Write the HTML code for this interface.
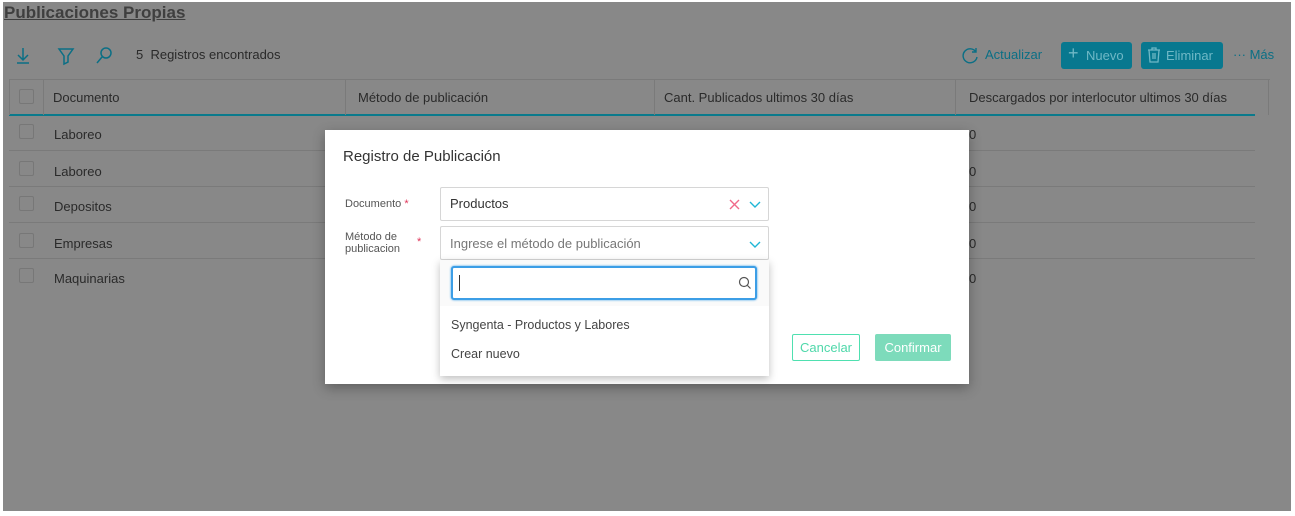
<!DOCTYPE html>
<html><head><meta charset="utf-8"><style>
*{box-sizing:border-box;margin:0;padding:0}
body{width:1295px;height:516px;background:#fff;position:relative;overflow:hidden;font-family:"Liberation Sans",sans-serif;color:#222}
.ov{position:absolute;left:3px;top:2px;width:1288px;height:509px;background:#888}
.a{position:absolute;white-space:nowrap}
.t{font-size:13px;color:#2a2a2a}
.hl{position:absolute;height:1px;background:#7a7a7a}
.cb{position:absolute;width:15px;height:15px;border:1px solid #777;border-radius:2px}
.btn{position:absolute;background:#08788f;color:#6fb8c6;border-radius:3px;font-size:13px;height:27px;line-height:27px;padding-left:25px}
.modal{position:absolute;left:325px;top:130px;width:644px;height:254px;background:#fff;box-shadow:0 4px 12px rgba(0,0,0,.3)}
.inp{position:absolute;border:1px solid #d6d6d6;border-radius:2px;background:#fff;font-size:13px}
</style></head><body>
<div class="ov"></div>
<div class="a" style="left:4px;top:3px;font-size:17px;font-weight:bold;color:#3f3f3f;text-decoration:underline">Publicaciones Propias</div>
<svg class="a" style="left:14px;top:46px" width="110" height="20" fill="none" stroke="#0b6f85" stroke-width="1.5">
<path d="M9 2v12M4 9l5 5 5-5M3 17h12"/>
<path d="M45 3h14l-5 7v6l-4 2v-8z"/>
<circle cx="92" cy="7" r="5"/><path d="M88 11l-5 6"/>
</svg>
<div class="a t" style="left:136px;top:47px;">5&nbsp; Registros encontrados</div>
<svg class="a" style="left:962px;top:47px" width="18" height="18" fill="none" stroke="#0b6f85" stroke-width="1.4"><path d="M14 5A7 7 0 1 0 15 10M14 1v4h-4"/></svg>
<div class="a" style="left:985px;top:47px;font-size:13px;color:#0b6f85">Actualizar</div>
<div class="btn" style="left:1061px;top:42px;width:71px">Nuevo</div>
<div class="a" style="left:1068px;top:43px;font-size:18px;color:#6fb8c6">+</div>
<div class="btn" style="left:1141px;top:42px;width:82px">Eliminar</div>
<svg class="a" style="left:1147px;top:47px" width="14" height="16" fill="none" stroke="#6fb8c6" stroke-width="1.3"><path d="M1 3h12M5 3V1h4v2M2 3l1 12h8l1-12M6 6v6M8 6v6"/></svg>
<div class="a" style="left:1233px;top:47px;font-size:13px;color:#0b6f85">··· Más</div>
<div class="hl" style="left:9px;top:79px;width:1261px"></div>
<div class="hl" style="left:9px;top:114px;width:1246px;height:2px;background:#0a7a8c"></div>
<div class="a" style="left:9px;top:79px;width:1px;height:36px;background:#7a7a7a"></div>
<div class="a" style="left:43px;top:79px;width:1px;height:36px;background:#7a7a7a"></div>
<div class="a" style="left:345px;top:79px;width:1px;height:36px;background:#7a7a7a"></div>
<div class="a" style="left:654px;top:79px;width:1px;height:36px;background:#7a7a7a"></div>
<div class="a" style="left:955px;top:79px;width:1px;height:36px;background:#7a7a7a"></div>
<div class="a" style="left:1268px;top:79px;width:1px;height:36px;background:#7a7a7a"></div>
<div class="cb" style="left:19px;top:89px"></div>
<div class="a t" style="left:53px;top:90px">Documento</div>
<div class="a t" style="left:358px;top:90px">Método de publicación</div>
<div class="a t" style="left:664px;top:90px">Cant. Publicados ultimos 30 días</div>
<div class="a t" style="left:969px;top:90px">Descargados por interlocutor ultimos 30 días</div>
<div class="cb" style="left:19px;top:124px"></div><div class="a t" style="left:54px;top:127px">Laboreo</div>
<div class="hl" style="left:9px;top:150px;width:1246px"></div>
<div class="cb" style="left:19px;top:161px"></div><div class="a t" style="left:54px;top:164px">Laboreo</div>
<div class="hl" style="left:9px;top:186px;width:1246px"></div>
<div class="cb" style="left:19px;top:196px"></div><div class="a t" style="left:54px;top:199px">Depositos</div>
<div class="hl" style="left:9px;top:222px;width:1246px"></div>
<div class="cb" style="left:19px;top:233px"></div><div class="a t" style="left:54px;top:236px">Empresas</div>
<div class="hl" style="left:9px;top:258px;width:1246px"></div>
<div class="cb" style="left:19px;top:268px"></div><div class="a t" style="left:54px;top:271px">Maquinarias</div>
<div class="a t" style="left:969px;top:127px">0</div>
<div class="a t" style="left:969px;top:164px">0</div>
<div class="a t" style="left:969px;top:199px">0</div>
<div class="a t" style="left:969px;top:236px">0</div>
<div class="a t" style="left:969px;top:271px">0</div>
<div class="modal">
<div class="a" style="left:18px;top:18px;font-size:15px;color:#333">Registro de Publicación</div>
<div class="a" style="left:20px;top:68px;font-size:11px;color:#555">Documento <span style="color:#e0365a">*</span></div>
<div class="a" style="left:20px;top:101px;font-size:11px;color:#555;line-height:12px">Método de<br>publicacion</div>
<div class="a" style="left:92px;top:106px;font-size:11px;color:#e0365a">*</div>
<div class="inp" style="left:115px;top:57px;width:329px;height:34px"><span class="a" style="left:9px;top:8px;color:#333">Productos</span>
<svg class="a" style="left:288px;top:11px" width="34" height="12" fill="none" stroke-width="1.4"><path d="M1 1l9 9M10 1l-9 9" stroke="#f06a8a"/><path d="M21 3l5 5 5-5" stroke="#1fb6d6"/></svg></div>
<div class="inp" style="left:115px;top:96px;width:329px;height:34px"><span class="a" style="left:9px;top:9px;color:#777">Ingrese el método de publicación</span>
<svg class="a" style="left:307px;top:12px" width="14" height="10" fill="none" stroke="#1fb6d6" stroke-width="1.4"><path d="M2 3l5 5 5-5"/></svg></div>
<div class="a" style="left:115px;top:130px;width:329px;height:116px;background:#fff;box-shadow:0 3px 8px rgba(0,0,0,.25)">
<div class="a" style="left:0;top:0;width:329px;height:46px;background:#fafafa"></div>
<div class="a" style="left:11px;top:6px;width:306px;height:34px;border:2px solid #3c9ee6;border-radius:3px;background:#fff;box-shadow:0 0 2px #3c9ee6"></div>
<div class="a" style="left:19px;top:15px;width:1px;height:16px;background:#333"></div>
<svg class="a" style="left:298px;top:16px" width="14" height="14" fill="none" stroke="#555" stroke-width="1.2"><circle cx="6" cy="6" r="4.5"/><path d="M9.5 9.5l3 3"/></svg>
<div class="a" style="left:11px;top:58px;font-size:12.5px;color:#444">Syngenta - Productos y Labores</div>
<div class="a" style="left:11px;top:87px;font-size:12.5px;color:#444">Crear nuevo</div>
</div>
<div class="a" style="left:467px;top:204px;width:68px;height:27px;border:1px solid #4fe0b0;border-radius:2px;color:#4fd8aa;font-size:13px;text-align:center;line-height:25px">Cancelar</div>
<div class="a" style="left:550px;top:204px;width:76px;height:27px;background:#7ddbbb;border-radius:2px;color:#fff;font-size:13px;text-align:center;line-height:27px">Confirmar</div>
</div>
</body></html>
